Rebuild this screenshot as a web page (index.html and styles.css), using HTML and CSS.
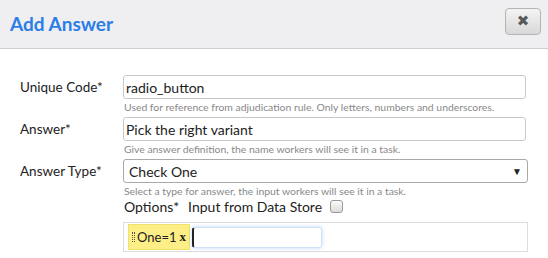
FILE: index.html
```html
<!DOCTYPE html>
<html lang="en">

<head>
    <meta charset="UTF-8">
    <title>Add Answer</title>
    <link rel="stylesheet" href="styles.css">
</head>

<body>
    <div class="modal">
        <div class="modal-header">
            <h3>Add Answer</h3>
            <button class="close-btn">&#10006;</button>
        </div>
        <div class="modal-body">
            <div class="form-row">
                <label>Unique Code*</label>
                <div class="field">
                    <input type="text" value="radio_button">
                    <p class="help">Used for reference from adjudication rule. Only letters, numbers and underscores.</p>
                </div>
            </div>
            <div class="form-row">
                <label>Answer*</label>
                <div class="field">
                    <input type="text" value="Pick the right variant">
                    <p class="help">Give answer definition, the name workers will see it in a task.</p>
                </div>
            </div>
            <div class="form-row">
                <label>Answer Type*</label>
                <div class="field">
                    <div class="select">
                        <span>Check One</span>
                        <span class="arrow">&#9660;</span>
                    </div>
                    <p class="help help-last">Select a type for answer, the input workers will see it in a task.</p>
                    <div class="options-line">
                        <span>Options*</span>
                        <span>Input from Data Store</span>
                        <span class="checkbox"></span>
                    </div>
                    <div class="tags">
                        <span class="tag"><span class="grip"></span>One=1 <b>x</b></span>
                        <span class="tag-input"></span>
                    </div>
                </div>
            </div>
        </div>
    </div>
</body>

</html>
```

FILE: styles.css
```css
body {
    margin: 0;
    font-family: Lato, "Liberation Sans", sans-serif;
    color: #333;
    background-color: #fff;
}

.modal {
    width: 548px;
    height: 258px;
    overflow: hidden;
}

.modal-header {
    display: flex;
    align-items: center;
    justify-content: space-between;
    height: 48px;
    padding: 0 7px 0 10px;
    background-color: #efeff2;
    border-bottom: 1px solid #cfcfd2;
}

.modal-header h3 {
    margin: 0 0 1px;
    font-size: 19px;
    font-weight: bold;
    color: #2b7de8;
}

.close-btn {
    width: 36px;
    height: 27px;
    margin-bottom: 6px;
    padding: 0;
    border: 1px solid #b4b4b4;
    border-radius: 4px;
    background: linear-gradient(#f4f4f4, #d8d8d8);
    color: #5a5a5a;
    font-size: 15px;
    font-family: "DejaVu Sans", sans-serif;
}

.modal-body {
    padding: 26px 0 0 20px;
}

.form-row {
    display: flex;
}

label {
    width: 103px;
    line-height: 24px;
    font-size: 13.5px;
    color: #222;
}

.field {
    width: 405px;
}

input[type="text"],
.select {
    box-sizing: border-box;
    width: 403px;
    height: 24px;
    margin: 0;
    padding: 0 4px 0 2px;
    border: 1px solid #c8c8c8;
    border-radius: 3px;
    font-family: inherit;
    font-size: 14px;
    color: #222;
}

.select {
    display: flex;
    align-items: center;
    justify-content: space-between;
    width: 405px;
    padding: 0 5px 0 5px;
    border-color: #aaa;
}

.arrow {
    font-size: 10px;
    color: #222;
}

.help {
    margin: 1px 0 3px 1px;
    line-height: 14px;
    font-size: 10.4px;
    color: #888;
}

.help-last {
    margin-bottom: 0;
}

.options-line {
    display: flex;
    align-items: center;
    gap: 9px;
    height: 16px;
    margin: 0 0 8px 1px;
    font-size: 14px;
    color: #222;
}

.checkbox {
    width: 11px;
    height: 11px;
    margin-left: -1px;
    border: 1px solid #999;
    border-radius: 3px;
    background: linear-gradient(#fafafa, #dcdcdc);
}

.tags {
    display: flex;
    align-items: center;
    gap: 2px;
    box-sizing: border-box;
    width: 405px;
    height: 30px;
    padding: 0 4px;
    border: 1px solid #ddd;
}

.tag {
    display: flex;
    align-items: center;
    height: 24px;
    padding: 0 3px 0 3px;
    background-color: #fdee86;
    border: 1px solid #f0e070;
    font-size: 13px;
    color: #222;
}

.tag b {
    margin-left: 3px;
    font-family: "Liberation Serif", serif;
    font-size: 13px;
}

.grip {
    width: 1px;
    height: 10px;
    margin-right: 2px;
    border-left: 1px dotted #555;
    border-right: 1px dotted #555;
}

.tag-input {
    box-sizing: border-box;
    width: 130px;
    height: 21px;
    border: 1px solid #cfe2f5;
    border-left: 2px solid #222;
    border-radius: 3px;
    box-shadow: 0 0 4px rgba(80, 150, 230, 0.35);
}
```
